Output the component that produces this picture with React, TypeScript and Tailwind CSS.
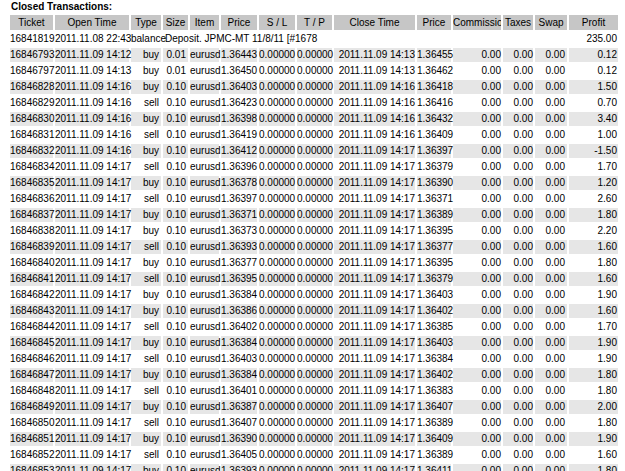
const rows: [string,string,string,string,string,string,string,string][] = [
["16846793","14:12","buy","0.01","1.36443","14:13","1.36455","0.12"],
["16846797","14:13","buy","0.01","1.36450","14:13","1.36462","0.12"],
["16846828","14:16","buy","0.10","1.36403","14:16","1.36418","1.50"],
["16846829","14:16","sell","0.10","1.36423","14:16","1.36416","0.70"],
["16846830","14:16","buy","0.10","1.36398","14:16","1.36432","3.40"],
["16846831","14:16","sell","0.10","1.36419","14:16","1.36409","1.00"],
["16846832","14:16","buy","0.10","1.36412","14:17","1.36397","-1.50"],
["16846834","14:17","sell","0.10","1.36396","14:17","1.36379","1.70"],
["16846835","14:17","buy","0.10","1.36378","14:17","1.36390","1.20"],
["16846836","14:17","sell","0.10","1.36397","14:17","1.36371","2.60"],
["16846837","14:17","buy","0.10","1.36371","14:17","1.36389","1.80"],
["16846838","14:17","buy","0.10","1.36373","14:17","1.36395","2.20"],
["16846839","14:17","sell","0.10","1.36393","14:17","1.36377","1.60"],
["16846840","14:17","buy","0.10","1.36377","14:17","1.36395","1.80"],
["16846841","14:17","sell","0.10","1.36395","14:17","1.36379","1.60"],
["16846842","14:17","buy","0.10","1.36384","14:17","1.36403","1.90"],
["16846843","14:17","buy","0.10","1.36386","14:17","1.36402","1.60"],
["16846844","14:17","sell","0.10","1.36402","14:17","1.36385","1.70"],
["16846845","14:17","buy","0.10","1.36384","14:17","1.36403","1.90"],
["16846846","14:17","sell","0.10","1.36403","14:17","1.36384","1.90"],
["16846847","14:17","buy","0.10","1.36384","14:17","1.36402","1.80"],
["16846848","14:17","sell","0.10","1.36401","14:17","1.36383","1.80"],
["16846849","14:17","buy","0.10","1.36387","14:17","1.36407","2.00"],
["16846850","14:17","sell","0.10","1.36407","14:17","1.36389","1.80"],
["16846851","14:17","buy","0.10","1.36390","14:17","1.36409","1.90"],
["16846852","14:17","sell","0.10","1.36405","14:17","1.36389","1.60"],
["16846853","14:17","buy","0.10","1.36393","14:17","1.36411","1.80"],
["16846854","14:17","sell","0.10","1.36410","14:17","1.36391","1.90"],
["16846855","14:17","buy","0.10","1.36391","14:17","1.36411","2.00"],
];
const widths=[43,74,30,25,29,36,36,35,81,34,48,30,32,49];
const heads=["Ticket","Open Time","Type","Size","Item","Price","S / L","T / P","Close Time","Price","Commission","Taxes","Swap","Profit"];
export default function App(){
  return (
    <div className="bg-white w-[625px] h-[471px] overflow-hidden pl-[8px] pt-[1px] text-[10px] text-black" style={{fontFamily:'"Liberation Sans", Arial, sans-serif'}}>
      <div className="font-bold text-[10px] h-[12px] leading-[12px] ml-[3px]">Closed Transactions:</div>
      <table className="border-separate [border-spacing:2px] table-fixed w-[612px] whitespace-nowrap">
        <colgroup>{widths.map((w,i)=><col key={i} style={{width:w}}/>)}</colgroup>
        <thead><tr className="bg-[#c6c6c6] h-[15px]">{heads.map((h,i)=><th key={i} className="font-normal p-0 text-center leading-[15px] overflow-hidden">{h}</th>)}</tr></thead>
        <tbody>
          <tr className="h-[14px] leading-[14px]">
            <td className="text-center p-0">16841819</td>
            <td className="text-center p-0">2011.11.08 22:43</td>
            <td className="text-right p-0">balance</td>
            <td colSpan={5} className="p-0 pl-[2px]">Deposit. JPMC-MT 11/8/11 [#1678</td>
            <td colSpan={5}></td>
            <td className="text-right p-0 pr-[1px]">235.00</td>
          </tr>
          {rows.map((r,i)=>(
            <tr key={r[0]} className={`h-[14px] leading-[14px] ${i%2===0?"bg-[#e6e6e6]":""}`}>
              <td className="text-center p-0">{r[0]}</td>
              <td className="text-center p-0">2011.11.09 {r[1]}</td>
              <td className="text-right p-0 pr-[2px]">{r[2]}</td>
              <td className="text-right p-0 pr-[2px]">{r[3]}</td>
              <td className="text-center p-0">eurusd</td>
              <td className="text-right p-0">{r[4]}</td>
              <td className="text-right p-0">0.00000</td>
              <td className="text-right p-0">0.00000</td>
              <td className="text-right p-0">2011.11.09 {r[5]}</td>
              <td className="text-right p-0">{r[6]}</td>
              <td className="text-right p-0">0.00</td>
              <td className="text-right p-0">0.00</td>
              <td className="text-right p-0 pr-[2px]">0.00</td>
              <td className="text-right p-0 pr-[1px]">{r[7]}</td>
            </tr>
          ))}
        </tbody>
      </table>
    </div>
  );
}
